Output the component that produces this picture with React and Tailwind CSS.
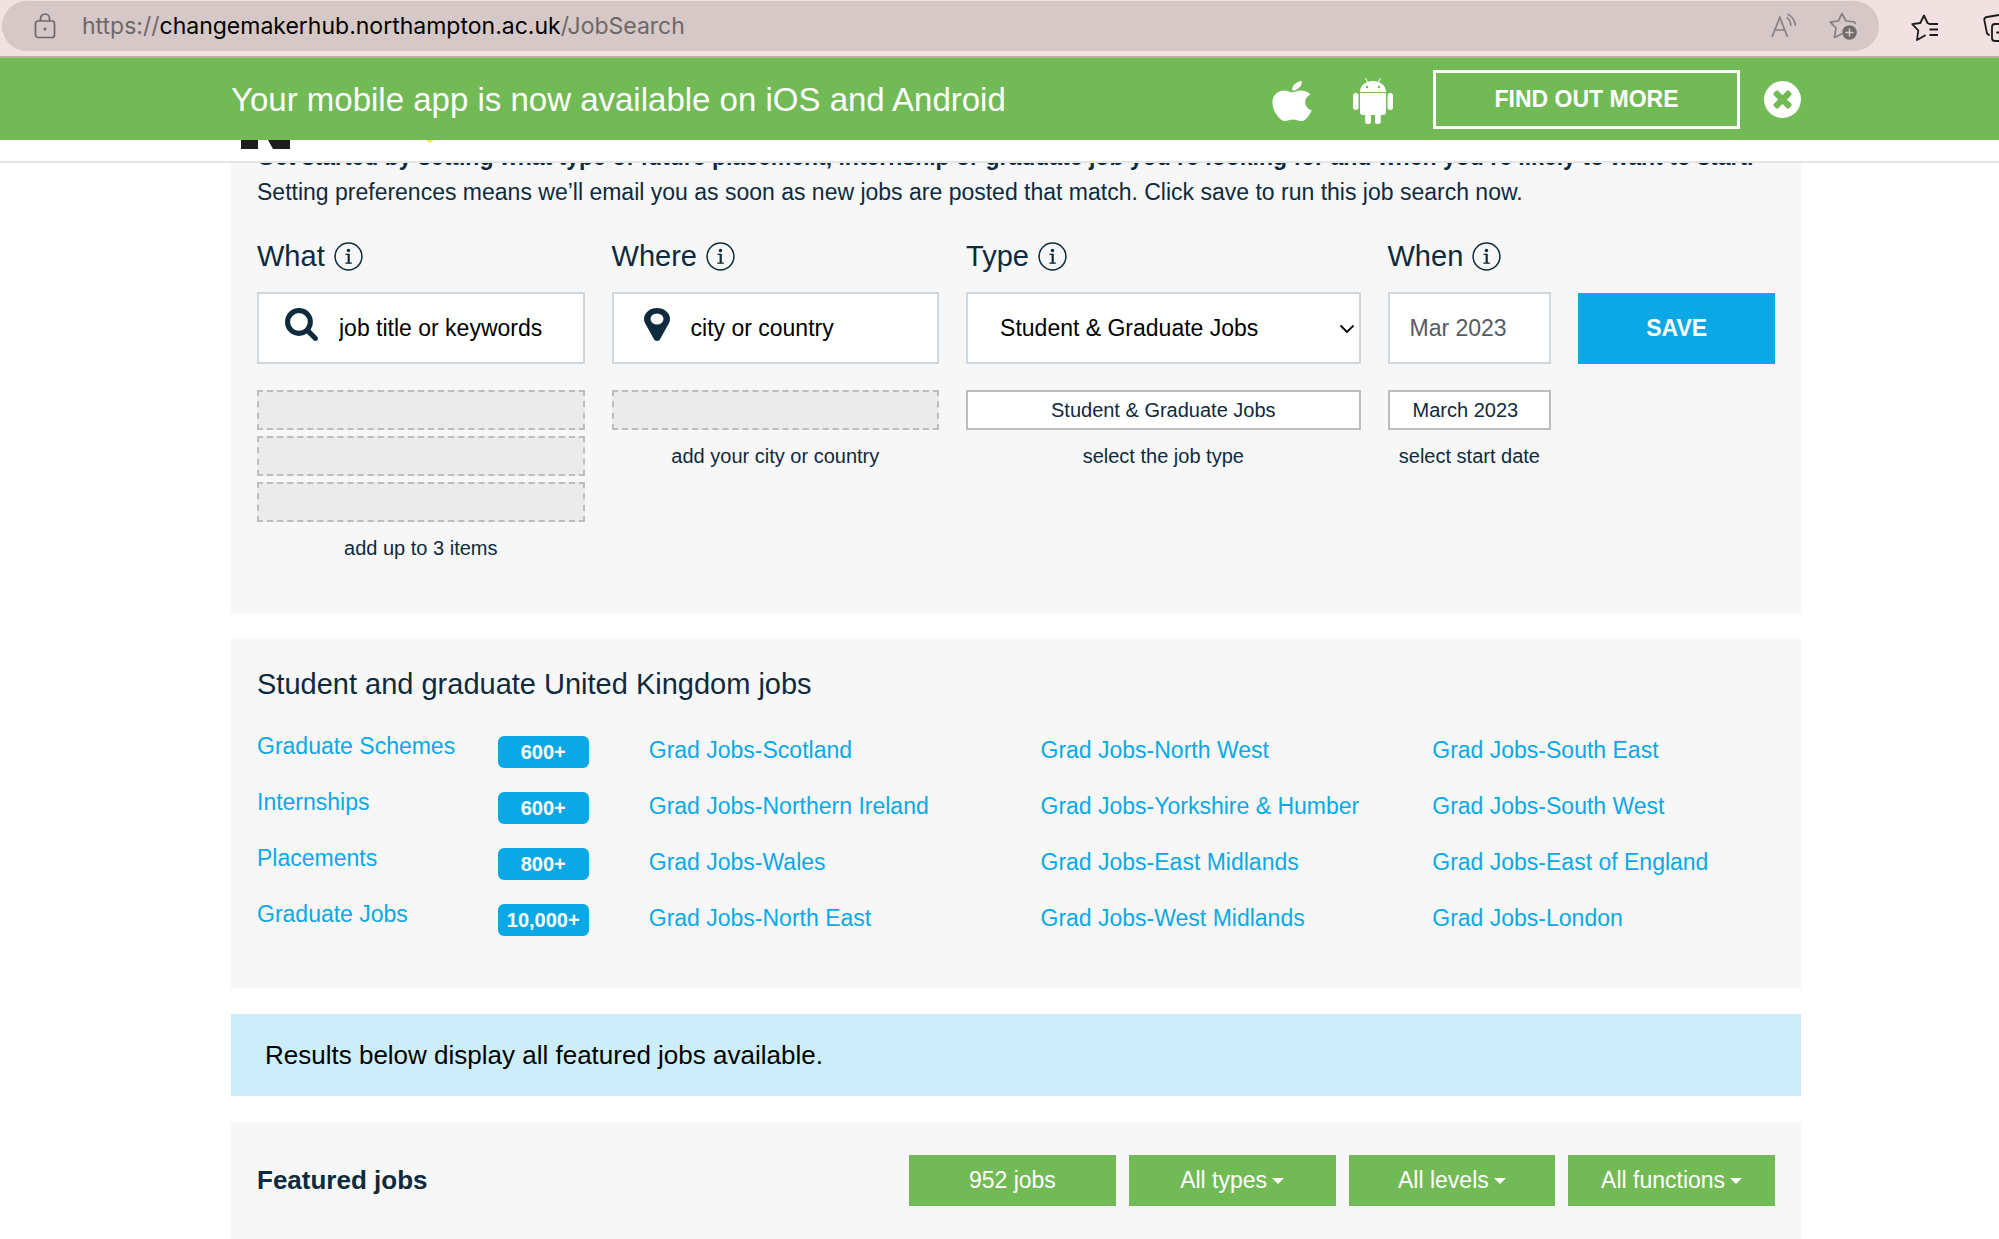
import React from 'react';
import { FaApple } from 'react-icons/fa';

const jobLinks = [
    { label: 'Graduate Schemes', count: '600+' },
    { label: 'Internships', count: '600+' },
    { label: 'Placements', count: '800+' },
    { label: 'Graduate Jobs', count: '10,000+' }
];

const regionLinks = [
    ['Grad Jobs-Scotland', 'Grad Jobs-Northern Ireland', 'Grad Jobs-Wales', 'Grad Jobs-North East'],
    ['Grad Jobs-North West', 'Grad Jobs-Yorkshire & Humber', 'Grad Jobs-East Midlands', 'Grad Jobs-West Midlands'],
    ['Grad Jobs-South East', 'Grad Jobs-South West', 'Grad Jobs-East of England', 'Grad Jobs-London']
];

const filters = ['All types', 'All levels', 'All functions'];

const SearchIcon = ({ className }) => (
    <svg viewBox="64 128 1664 1664" className={className} fill="currentColor" aria-hidden="true">
        <path d="M1216 832q0-185-131.5-316.5t-316.5-131.5-316.5 131.5-131.5 316.5 131.5 316.5 316.5 131.5 316.5-131.5 131.5-316.5zm512 832q0 52-38 90t-90 38q-54 0-90-38l-343-342q-179 124-399 124-143 0-273.5-55.5t-225-150-150-225-55.5-273.5 55.5-273.5 150-225 225-150 273.5-55.5 273.5 55.5 225 150 150 225 55.5 273.5q0 220-124 399l343 343q37 37 37 90z" />
    </svg>
);

const PinIcon = ({ className }) => (
    <svg viewBox="256 128 1024 1536" className={className} fill="currentColor" preserveAspectRatio="none" aria-hidden="true">
        <path d="M1024 640q0-106-75-181t-181-75-181 75-75 181 75 181 181 75 181-75 75-181zm256 0q0 109-33 179l-364 774q-16 33-47.5 52t-67.5 19-67.5-19-46.5-52l-365-774q-33-70-33-179 0-212 150-362t362-150 362 150 150 362z" />
    </svg>
);

const CloseIcon = ({ className }) => (
    <svg viewBox="128 128 1536 1536" className={className} fill="currentColor" aria-hidden="true">
        <path d="M1277 1122q0-26-19-45l-181-181 181-181q19-19 19-45 0-27-19-46l-90-90q-19-18-46-18-26 0-45 19l-181 181-181-181q-19-19-45-19-27 0-46 19l-90 90q-19 19-19 46 0 26 19 45l181 181-181 181q-19 19-19 45 0 27 19 46l90 90q19 19 46 19 26 0 45-19l181-181 181 181q19 19 45 19 27 0 46-19l90-90q19-19 19-46zm387-226q0 209-103 385.5t-279.5 279.5-385.5 103-385.5-103-279.5-279.5-103-385.5 103-385.5 279.5-279.5 385.5-103 385.5 103 279.5 279.5 103 385.5z" />
    </svg>
);

const AndroidIcon = ({ className }) => (
    <svg viewBox="0 0 40 46" className={className} fill="currentColor" aria-hidden="true">
        <path d="M12.5 0.5l2.5 4M27.5 0.5l-2.500 4" stroke="currentColor" strokeWidth="1" strokeLinecap="round" />
        <path fillRule="evenodd" d="M7 14C7 7 13 3 20 3s13 4 13 11zM14 7.800a1.200 1.200 0 1 0 0 2.400 1.200 1.200 0 0 0 0-2.400zM26 7.800a1.200 1.200 0 1 0 0 2.400 1.200 1.200 0 0 0 0-2.400z" />
        <path d="M7 15h26v19a3 3 0 0 1-3 3H10a3 3 0 0 1-3-3z" />
        <rect x="0" y="15" width="5.500" height="17" rx="2.750" />
        <rect x="34.500" y="15" width="5.500" height="17" rx="2.750" />
        <rect x="12.200" y="30" width="5.800" height="16" rx="2.500" />
        <rect x="22" y="30" width="5.800" height="16" rx="2.500" />
    </svg>
);

const InfoButton = ({ label }) => (
    <button type="button" aria-label={label}>
        <svg viewBox="0 0 29 29" className="size-[29px]" fill="none" stroke="currentColor" aria-hidden="true">
            <circle cx="14.500" cy="14.500" r="13.400" strokeWidth="1.500" />
            <circle cx="14.500" cy="8.500" r="1.700" fill="currentColor" stroke="none" />
            <path d="M11.500 12.400h3M11.300 21.200h6.600" strokeWidth="1.200" />
            <path d="M14.700 11.800v9.400" strokeWidth="2.200" />
        </svg>
    </button>
);

const FieldLabel = ({ htmlFor, children }) => (
    <div className="flex items-center gap-[9px] h-9 mb-[18px]">
        <label htmlFor={htmlFor} className="text-[29px] leading-9">{children}</label>
        <InfoButton label={`About ${children}`} />
    </div>
);

const EmptySlot = () => <div className="h-10 border-2 border-dashed border-[#bdbdbd] bg-[#ebebeb]" />;

const Hint = ({ children }) => <p className="text-[20px] leading-6 text-center whitespace-nowrap mt-2">{children}</p>;

const BrowserBar = () => (
    <div className="flex items-center h-[58px] bg-[#f1e1e0] border-b-2 border-[#b5b39f] overflow-hidden">
        <div className="flex-1 flex items-center h-[50px] ml-[2px] mb-1 rounded-full bg-[#d6c8c7] pl-8 pr-[22px] text-[#6d6867]">
            <svg viewBox="0 0 22 26" className="w-[22px] h-[26px] shrink-0" fill="none" stroke="currentColor" strokeWidth="1.700" aria-hidden="true">
                <rect x="1.500" y="8" width="19" height="16.500" rx="2.500" />
                <path d="M6.500 8V5.500a4.500 4.500 0 0 1 9 0V8" />
                <circle cx="11" cy="16" r="1.500" fill="currentColor" stroke="none" />
            </svg>
            <p className="flex-1 ml-[26px] font-['Inter',sans-serif] text-[23px] leading-8">
                https://<span className="text-black">changemakerhub.northampton.ac.uk</span>/JobSearch
            </p>
            <button type="button" aria-label="Read aloud" className="mr-8">
                <svg viewBox="0 0 26 26" className="size-[26px]" fill="none" stroke="#858080" strokeWidth="1.700" aria-hidden="true">
                    <path d="M1 24L8.800 4.500L16.500 24M3.800 17h10" />
                    <path d="M15.500 4.500c3 1.500 4.300 4.500 4.300 8.500M16.500 1c5 2.500 7.500 6.500 8 12" strokeWidth="1.500" />
                </svg>
            </button>
            <button type="button" aria-label="Add to favourites">
                <svg viewBox="0 0 28 28" className="size-7" fill="none" stroke="#858080" strokeWidth="1.700" strokeLinejoin="round" strokeLinecap="round" aria-hidden="true">
                    <path d="M26 11.500L25.500 10L17 9L13 1.500L9.300 9L1.300 10.200L7 16L5.500 25.500L12.500 22" />
                    <circle cx="20.500" cy="20.500" r="7.300" fill="#716c6b" stroke="none" />
                    <path d="M20.500 17v7M17 20.500h7" stroke="#d6c8c7" strokeWidth="1.500" />
                </svg>
            </button>
        </div>
        <div className="flex items-center gap-11 w-[120px] pl-8 text-[#1d1a1a]">
            <button type="button" aria-label="Favourites" className="shrink-0">
                <svg viewBox="0 0 28 28" className="size-7" fill="none" stroke="currentColor" strokeWidth="1.800" strokeLinejoin="round" strokeLinecap="round" aria-hidden="true">
                    <path d="M18.500 10L16.500 9L13 1.500L9.300 9L1.300 10.200L7.300 16.500L6 26L14 21.500" />
                    <path d="M18.500 10H27M18.500 15.500H27M18.500 21H27" strokeLinecap="butt" />
                </svg>
            </button>
            <button type="button" aria-label="Collections" className="shrink-0">
                <svg viewBox="0 0 28 28" className="size-7" fill="none" stroke="currentColor" strokeWidth="1.800" strokeLinejoin="round" strokeLinecap="round" aria-hidden="true">
                    <path d="M6 21L4 19.500L1.300 6Q1 3.500 4 3L16 1" />
                    <rect x="9" y="10" width="19" height="17" rx="3" />
                    <path d="M18 14.500v8M14 18.500h8" />
                </svg>
            </button>
        </div>
    </div>
);

const AppBanner = () => (
    <div className="flex items-center h-[82px] bg-[#72ba55] text-white pl-[231px] pr-[198px]">
        <p className="flex-1 text-[33px] leading-10 pt-[2px]">Your mobile app is now available on iOS and Android</p>
        <FaApple className="w-10 h-[46px] mt-1 mr-[41px]" preserveAspectRatio="none" aria-label="iOS" />
        <AndroidIcon className="w-10 h-[46px] mt-1 mr-10" />
        <button type="button" className="w-[307px] h-[59px] border-3 border-white text-[23px] font-bold mr-6">
            FIND OUT MORE
        </button>
        <button type="button" aria-label="Close banner">
            <CloseIcon className="size-[37px]" />
        </button>
    </div>
);

const SiteHeader = () => (
    <header className="flex items-start gap-34 h-[23px] pl-[241px] bg-white border-b-2 border-[#e5e5e5]">
        <svg viewBox="0 0 49 9" className="w-[49px] h-[9px]" fill="#1d1d1b" aria-hidden="true">
            <path d="M0 0h17v9H0zM27 0h22v9H32z" />
        </svg>
        <svg viewBox="0 0 8 3" className="w-2 h-[3px]" fill="#f3ea4a" aria-hidden="true">
            <path d="M0 0h8l-4 3z" />
        </svg>
    </header>
);

const SearchPanel = () => (
    <section className="bg-[#f7f7f7] px-[26px] pb-[53px] overflow-hidden">
        <div className="-mt-5 text-[23px] leading-[34px]">
            <p className="font-bold whitespace-nowrap h-[31px] flex items-end">
                Get started by setting what type of future placement, internship or graduate job you’re looking for and when you’re likely to want to start.
            </p>
            <p className="mt-px whitespace-nowrap">
                Setting preferences means we’ll email you as soon as new jobs are posted that match. Click save to run this job search now.
            </p>
        </div>
        <form className="grid grid-cols-[328fr_328fr_395fr_164fr_197fr] gap-x-[27px] mt-[29px]">
            <div>
                <FieldLabel htmlFor="what">What</FieldLabel>
                <div className="flex items-center h-[72px] border-2 border-[#d0d7dd] bg-white pl-[26px] mb-[26px]">
                    <SearchIcon className="size-[33px] shrink-0 mb-2" />
                    <input id="what" type="text" placeholder="job title or keywords" className="w-full min-w-0 pl-[21px] text-[23px] outline-none placeholder:text-black" />
                </div>
                <div className="flex flex-col gap-[6px]">
                    <EmptySlot />
                    <EmptySlot />
                    <EmptySlot />
                    <Hint>add up to 3 items</Hint>
                </div>
            </div>
            <div>
                <FieldLabel htmlFor="where">Where</FieldLabel>
                <div className="flex items-center h-[72px] border-2 border-[#d0d7dd] bg-white pl-[30px] mb-[26px]">
                    <PinIcon className="w-[26px] h-[33px] shrink-0 mb-2" />
                    <input id="where" type="text" placeholder="city or country" className="w-full min-w-0 pl-[21px] text-[23px] outline-none placeholder:text-black" />
                </div>
                <div className="flex flex-col gap-[6px]">
                    <EmptySlot />
                    <Hint>add your city or country</Hint>
                </div>
            </div>
            <div>
                <FieldLabel htmlFor="type">Type</FieldLabel>
                <div className="relative mb-[26px]">
                    <select id="type" className="appearance-none w-full h-[72px] border-2 border-[#d0d7dd] bg-white pl-8 text-[23px] text-black">
                        <option>Student &amp; Graduate Jobs</option>
                    </select>
                    <svg viewBox="0 0 16 10" className="absolute right-[6px] top-8 w-4 h-[10px] pointer-events-none" fill="none" stroke="black" strokeWidth="1.800" aria-hidden="true">
                        <path d="M1.500 1.500L8 8L14.500 1.500" />
                    </svg>
                </div>
                <div className="flex flex-col gap-[6px]">
                    <button type="button" className="h-10 border-2 border-[#bdbdbd] bg-white text-[20px]">Student &amp; Graduate Jobs</button>
                    <Hint>select the job type</Hint>
                </div>
            </div>
            <div>
                <FieldLabel htmlFor="when">When</FieldLabel>
                <input id="when" type="text" defaultValue="Mar 2023" className="block w-full h-[72px] border-2 border-[#d0d7dd] bg-white pl-5 mb-[26px] text-[23px] text-[#555b63]" />
                <div className="flex flex-col gap-[6px]">
                    <button type="button" className="h-10 border-2 border-[#bdbdbd] bg-white text-[20px] pr-2">March 2023</button>
                    <Hint>select start date</Hint>
                </div>
            </div>
            <button type="submit" className="h-[71px] mt-[55px] bg-[#0aa9e6] text-white text-[23px] font-bold">SAVE</button>
        </form>
    </section>
);

const UkJobsPanel = () => (
    <section className="bg-[#f7f7f7] pt-[25px] pb-[38px]">
        <h2 className="px-[26px] text-[29px] leading-10">Student and graduate United Kingdom jobs</h2>
        <div className="grid grid-cols-4 mt-[22px] mr-[3px] text-[23px] leading-8 text-[#0aa9e6]">
            <ul className="pl-[26px]">
                {jobLinks.map((job) => (
                    <li key={job.label} className="flex justify-between h-14 pr-[34px]">
                        <a href="#" className="mt-1">{job.label}</a>
                        <span className="mt-[10px] w-[91px] h-8 rounded-md bg-[#0aa9e6] text-white text-center text-[20px] font-bold">{job.count}</span>
                    </li>
                ))}
            </ul>
            {regionLinks.map((column) => (
                <ul key={column[0]} className="pl-[26px]">
                    {column.map((region) => (
                        <li key={region} className="h-14 pt-2">
                            <a href="#">{region}</a>
                        </li>
                    ))}
                </ul>
            ))}
        </div>
    </section>
);

const FeaturedPanel = () => (
    <section className="flex-1 flex items-start justify-between bg-[#f7f7f7] px-[26px] pt-[33px]">
        <h2 className="text-[26px] leading-[51px] font-bold">Featured jobs</h2>
        <div className="grid grid-cols-4 gap-[13px] w-[866px] text-[23px] text-white">
            <button type="button" className="h-[51px] bg-[#72ba55]">952 jobs</button>
            {filters.map((filter) => (
                <button key={filter} type="button" className="flex items-center justify-center gap-[5px] h-[51px] bg-[#72ba55]">
                    {filter}
                    <span className="border-x-6 border-t-6 border-x-transparent border-t-white" />
                </button>
            ))}
        </div>
    </section>
);

const App = () => {
    return (
        <div className="flex flex-col min-h-screen bg-white text-[#0e2a3d] font-['Liberation_Sans',Arial,sans-serif]">
            <BrowserBar />
            <AppBanner />
            <SiteHeader />
            <main className="flex-1 flex flex-col gap-[26px] pl-[231px] pr-[198px]">
                <SearchPanel />
                <UkJobsPanel />
                <p className="bg-[#cdedf8] text-black text-[26px] leading-[82px] pl-[34px]">Results below display all featured jobs available.</p>
                <FeaturedPanel />
            </main>
        </div>
    );
};

export default App;
